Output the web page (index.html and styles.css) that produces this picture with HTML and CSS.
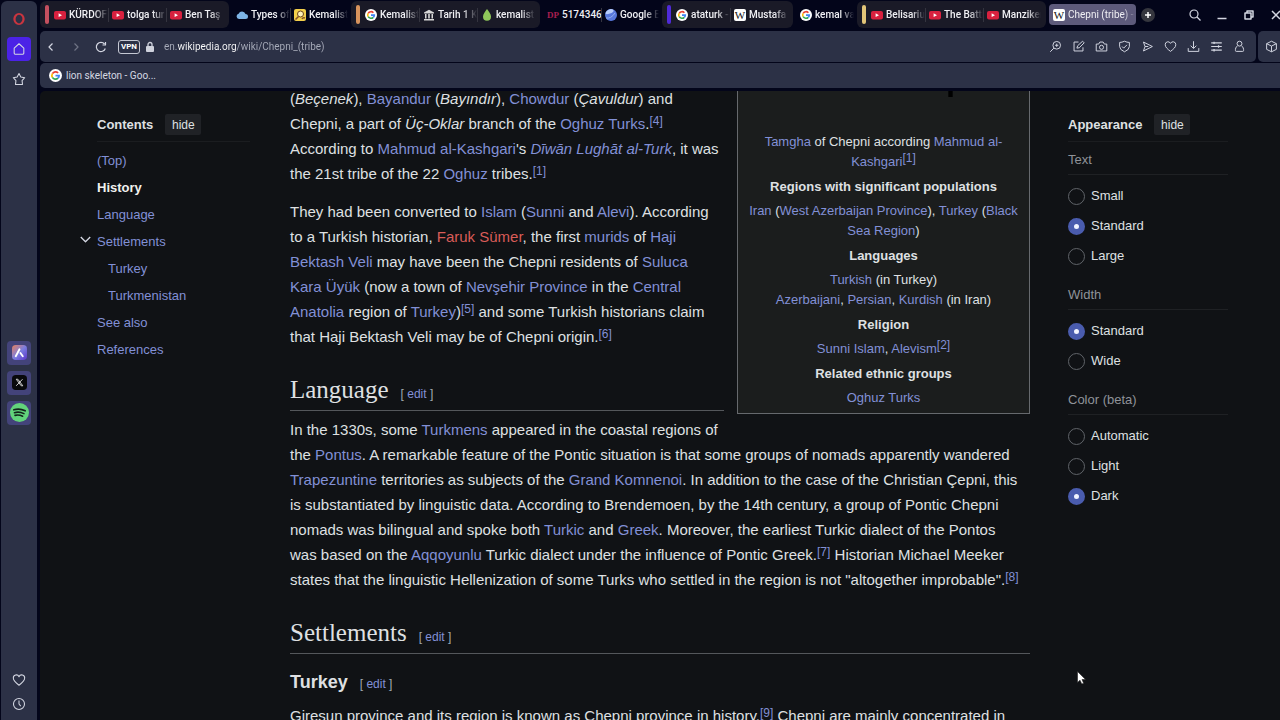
FILE: index.html
```html
<!DOCTYPE html>
<html lang="en">
<head>
    <meta charset="UTF-8">
    <meta name="viewport" content="width=device-width, initial-scale=1.0">
    <title>Chepni (tribe) - Wikipedia</title>
    <link rel="stylesheet" href="styles.css">
</head>
<body>
    <!-- Shared icons -->
    <svg class="sprite" aria-hidden="true">
        <symbol id="youtube" viewBox="0 0 12 12">
            <rect x="0" y="2" width="12" height="8.5" rx="2" fill="#d8213f"/>
            <path d="M4.6 4.3v3.8l3.4-1.9z" fill="#fff"/>
        </symbol>
        <symbol id="google" viewBox="0 0 24 24">
            <circle cx="12" cy="12" r="12" fill="#fff"/>
            <g fill="none" stroke-width="3.2">
                <path d="M6.3 8.6A6.6 6.6 0 0 1 16.8 7.4" stroke="#ea4335"/>
                <path d="M6.3 15.4a6.6 6.6 0 0 1 0-6.8" stroke="#fbbc05"/>
                <path d="M16.6 16.7A6.6 6.6 0 0 1 6.3 15.4" stroke="#34a853"/>
                <path d="M12 12.2h6.6a6.6 6.6 0 0 1-2 4.5" stroke="#4285f4"/>
            </g>
        </symbol>
        <symbol id="heart" viewBox="0 0 16 16">
            <path d="M8 14C4 11 1.5 8.700 1.500 5.800A3.400 3.400 0 0 1 8 4.200a3.400 3.400 0 0 1 6.500 1.600C14.500 8.700 12 11 8 14z"/>
        </symbol>
    </svg>

    <nav class="sidebar">
        <div class="sidebar-top">
            <button class="side-button" aria-label="Menu">
                <svg viewBox="0 0 16 16"><ellipse cx="8" cy="8" rx="5.200" ry="5.600" fill="none" stroke="#c9353f" stroke-width="2.600"/><ellipse cx="8" cy="8" rx="2.800" ry="5" fill="#2c3146"/></svg>
            </button>
            <button class="side-button home" aria-label="Home">
                <svg class="line" viewBox="0 0 16 16"><path d="M2.500 7L8 2l5.500 5v5.500a1.500 1.500 0 0 1-1.500 1.500H4a1.500 1.500 0 0 1-1.500-1.500z"/></svg>
            </button>
            <button class="side-button" aria-label="Bookmarks">
                <svg class="line" viewBox="0 0 16 16"><path d="M8 1.800l2.100 3.900 4.400.8-3 3.300.5 4.400H4l.5-4.400-3-3.300 4.400-.8z"/></svg>
            </button>
        </div>
        <div class="sidebar-apps">
            <button class="app-button" aria-label="Aria">
                <svg viewBox="0 0 16 16">
                    <defs><linearGradient id="aria" x1="0" y1="0" x2="1" y2="1"><stop offset="0" stop-color="#e8825c"/><stop offset=".5" stop-color="#7c7ee0"/><stop offset="1" stop-color="#5a35c8"/></linearGradient></defs>
                    <rect width="16" height="16" rx="4" fill="url(#aria)"/>
                    <path d="M4 12l4-7.500M9 8.500l2.500 3.500" stroke="#fff" stroke-width="2" stroke-linecap="round"/>
                </svg>
            </button>
            <button class="app-button" aria-label="X">
                <svg viewBox="0 0 16 16">
                    <rect width="16" height="16" rx="4" fill="#08090c"/>
                    <path d="M4.500 4.500h1.700l5.300 7H9.800zM11.200 4.500l-6.700 7" fill="none" stroke="#ddd"/>
                </svg>
            </button>
            <button class="app-button" aria-label="Spotify">
                <svg class="spotify" viewBox="0 0 20 20">
                    <circle cx="10" cy="10" r="10" fill="#62d47b"/>
                    <path d="M4 7.200q6-2 12 1M4.700 10.200q5-1.500 10 1M5.300 13q4-1 8 .9" fill="none" stroke="#12251b" stroke-width="1.700" stroke-linecap="round"/>
                </svg>
            </button>
        </div>
        <div class="sidebar-bottom">
            <button class="side-button" aria-label="Favourites"><svg class="line" viewBox="0 0 16 16"><use href="#heart"/></svg></button>
            <button class="side-button" aria-label="History">
                <svg class="line" viewBox="0 0 16 16"><circle cx="8" cy="8" r="6.300"/><path d="M8 4v4l2 2.500"/></svg>
            </button>
        </div>
    </nav>

    <div class="browser">
        <header class="tab-strip">
            <div class="tab-group">
                <span class="group-mark red"></span>
                <button class="tab"><svg><use href="#youtube"/></svg><span>KÜRDOF</span></button>
                <button class="tab"><svg><use href="#youtube"/></svg><span>tolga tur</span></button>
                <button class="tab"><svg><use href="#youtube"/></svg><span>Ben Taş</span></button>
            </div>
            <div class="tab-set">
                <button class="tab">
                    <svg viewBox="0 0 12 12"><path d="M3 10a2.700 2.700 0 0 1-.4-5.300A3.700 3.700 0 0 1 9.500 5 2.500 2.500 0 0 1 9.500 10z" fill="#7db4e6"/></svg>
                    <span>Types of</span>
                </button>
                <button class="tab">
                    <svg viewBox="0 0 12 12"><rect width="12" height="12" rx="2" fill="#f3cf4a"/><circle cx="6.500" cy="5" r="3" fill="#fff2ba" stroke="#6b431d"/><path d="M1.500 10.500l3-3M8 10q1-2 3-1" stroke="#81502a" stroke-width="1.500" fill="none"/></svg>
                    <span>Kemalist</span>
                </button>
            </div>
            <div class="tab-group">
                <span class="group-mark orange"></span>
                <button class="tab"><svg><use href="#google"/></svg><span>Kemalist</span></button>
                <button class="tab">
                    <svg viewBox="0 0 12 12"><path d="M1 3.500L6 .8l5 2.700v1H1zM2 5h1.500v4.500H2zM5.200 5h1.600v4.500H5.200zM8.500 5H10v4.500H8.500zM1 10h10v1.500H1z" fill="#d8d8d8"/></svg>
                    <span>Tarih 1 K</span>
                </button>
                <button class="tab">
                    <svg viewBox="0 0 12 12"><path d="M6 0c2 3 4 5 4 7.700a4 4 0 0 1-8 0C2 5 4 3 6 0z" fill="#8fc75a"/></svg>
                    <span>kemalist</span>
                </button>
            </div>
            <div class="tab-set">
                <button class="tab"><i class="dp-icon">DP</i><span class="whole">5174346</span></button>
                <button class="tab">
                    <svg viewBox="0 0 12 12"><circle cx="6" cy="6" r="6" fill="#5878dc"/><path d="M.5 4A6 6 0 0 1 8 .4Q10 3 5 4.500T.5 4z" fill="#b8ccfa"/><path d="M1 9q5 1 9-5" stroke="#93aff1" fill="none"/></svg>
                    <span>Google E</span>
                </button>
            </div>
            <div class="tab-group">
                <span class="group-mark violet"></span>
                <button class="tab"><svg><use href="#google"/></svg><span>ataturk -</span></button>
                <button class="tab"><i class="wiki-icon">W</i><span>Mustafa</span></button>
            </div>
            <div class="tab-set">
                <button class="tab"><svg><use href="#google"/></svg><span>kemal va</span></button>
            </div>
            <div class="tab-group">
                <span class="group-mark yellow"></span>
                <button class="tab"><svg><use href="#youtube"/></svg><span>Belisarius</span></button>
                <button class="tab"><svg><use href="#youtube"/></svg><span>The Battl</span></button>
                <button class="tab"><svg><use href="#youtube"/></svg><span>Manziker</span></button>
            </div>
            <button class="tab active"><i class="wiki-icon">W</i><span>Chepni (tribe) -</span></button>
            <button class="new-tab" aria-label="New tab"><svg viewBox="0 0 8 8"><path d="M4 1v6M1 4h6" stroke="#fff" stroke-width="1.500"/></svg></button>
            <div class="window-controls">
                <button aria-label="Search tabs"><svg viewBox="0 0 12 12"><circle cx="5" cy="5" r="4"/><path d="M8 8l3.500 3.500"/></svg></button>
                <button aria-label="Minimize"><svg viewBox="0 0 12 12"><path d="M1.500 9.500h9" stroke-width="1.500"/></svg></button>
                <button aria-label="Restore"><svg viewBox="0 0 12 12"><path d="M2 4h6v6H2zM4 4V2h6v6H8" stroke-width="1.500"/></svg></button>
                <button aria-label="Close"><svg viewBox="0 0 12 12"><path d="M2 2l8 8M10 2l-8 8" stroke-width="1.500"/></svg></button>
            </div>
        </header>

        <div class="toolbar-row">
            <div class="toolbar">
                <div class="nav-buttons">
                    <button aria-label="Back"><svg viewBox="0 0 14 14"><path d="M8.500 3.500L5 7l3.500 3.500"/></svg></button>
                    <button aria-label="Forward" disabled><svg viewBox="0 0 14 14"><path d="M5.500 3.500L9 7l-3.500 3.500"/></svg></button>
                    <button aria-label="Reload"><svg viewBox="0 0 14 14"><path d="M11.300 8.500A4.600 4.600 0 1 1 10.500 4M11.500 2v3H8.500"/></svg></button>
                </div>
                <button class="vpn">VPN</button>
                <svg class="lock" viewBox="0 0 8 12"><rect y="5" width="8" height="6" rx="1" fill="#cfd2dc"/><path d="M2 5V3.500a2 2 0 0 1 4 0V5" fill="none" stroke="#cfd2dc" stroke-width="1.300"/></svg>
                <input class="address" type="text" aria-label="Address" value="en.wikipedia.org/wiki/Chepni_(tribe)">
                <div class="tool-buttons">
                    <button aria-label="Zoom"><svg viewBox="0 0 16 16"><circle cx="9.500" cy="6.500" r="4.700"/><path d="M6 10l-4.500 4.500M7.500 6.500h4M9.500 4.500v4"/></svg></button>
                    <button aria-label="Edit"><svg viewBox="0 0 16 16"><path d="M8 2.500H2.500v11h11V9M6 10l1-3 6-5.500 2 2L9 9.500z"/></svg></button>
                    <button aria-label="Snapshot"><svg viewBox="0 0 16 16"><path d="M1.500 5h3L6 2.500h4L11.500 5h3v8.500h-13z"/><circle cx="8" cy="9" r="2.500"/></svg></button>
                    <button aria-label="Protection"><svg viewBox="0 0 16 16"><path d="M8 1.500q3 1.500 6 1.500v5q0 4-6 6.500Q2 12 2 8V3q3 0 6-1.500zM5 8l2 2 4-4"/></svg></button>
                    <button aria-label="Send"><svg viewBox="0 0 16 16"><path d="M3 2.500L14 8 3 13.500 5 8zM5 8h4"/></svg></button>
                    <button aria-label="Add to favourites"><svg viewBox="0 0 16 16"><use href="#heart"/></svg></button>
                    <button aria-label="Downloads"><svg viewBox="0 0 16 16"><path d="M8 1.500V10M4.500 7L8 10.500 11.500 7M1.500 10v4h13v-4"/></svg></button>
                    <button aria-label="Easy setup"><svg viewBox="0 0 16 16"><path d="M1.500 3.500h13M1.500 8h13M1.500 12.500h13M5 2v3M10.500 6.500v3M5 11v3" stroke-width="1.500"/></svg></button>
                    <button aria-label="Profile"><svg viewBox="0 0 16 16"><circle cx="8" cy="4.500" r="3"/><path d="M5.500 7.500q-2.500 1-2.500 4v1.500q0 1 1 1h8q1 0 1-1v-1.500q0-3-2.500-4"/></svg></button>
                </div>
            </div>
            <div class="toolbar extensions">
                <button aria-label="Extensions"><svg viewBox="0 0 16 16"><path d="M8 1.500l6 3v7l-6 3-6-3v-7zM2 4.500l6 3 6-3M8 7.500v7"/></svg></button>
            </div>
        </div>

        <div class="bookmarks">
            <a href="#"><svg><use href="#google"/></svg>lion skeleton - Goo...</a>
        </div>

        <main class="page">
            <nav class="contents">
                <div class="panel-head"><h2>Contents</h2><button class="hide-button">hide</button></div>
                <ul>
                    <li><a href="#">(Top)</a></li>
                    <li><a class="current" href="#">History</a></li>
                    <li><a href="#language">Language</a></li>
                    <li>
                        <button class="toggle" aria-label="Toggle Settlements subsection"><svg viewBox="0 0 10 6"><path d="M.7.7L5 5 9.300.7"/></svg></button>
                        <a href="#settlements">Settlements</a>
                        <ul>
                            <li><a href="#turkey">Turkey</a></li>
                            <li><a href="#">Turkmenistan</a></li>
                        </ul>
                    </li>
                    <li><a href="#">See also</a></li>
                    <li><a href="#">References</a></li>
                </ul>
            </nav>

            <article class="article">
                <table class="infobox">
                    <tr><td class="tamgha"><svg viewBox="0 0 60 60"><path d="M30 0v60" stroke="#000" stroke-width="9"/></svg></td></tr>
                    <tr><td><a href="#">Tamgha</a> of Chepni according <a href="#">Mahmud al-<br>Kashgari</a><sup><a href="#">[1]</a></sup></td></tr>
                    <tr><th>Regions with significant populations</th></tr>
                    <tr><td><a href="#">Iran</a> (<a href="#">West Azerbaijan Province</a>), <a href="#">Turkey</a> (<a href="#">Black<br>Sea Region</a>)</td></tr>
                    <tr><th>Languages</th></tr>
                    <tr><td><a href="#">Turkish</a> (in Turkey)<br><a href="#">Azerbaijani</a>, <a href="#">Persian</a>, <a href="#">Kurdish</a> (in Iran)</td></tr>
                    <tr><th>Religion</th></tr>
                    <tr><td><a href="#">Sunni Islam</a>, <a href="#">Alevism</a><sup><a href="#">[2]</a></sup></td></tr>
                    <tr><th>Related ethnic groups</th></tr>
                    <tr><td><a href="#">Oghuz Turks</a></td></tr>
                </table>

                <p>(<i>Beçenek</i>), <a href="#">Bayandur</a> (<i>Bayındır</i>), <a href="#">Chowdur</a> (<i>Çavuldur</i>) and<br>
                Chepni, a part of <i>Üç-Oklar</i> branch of the <a href="#">Oghuz Turks</a>.<sup><a href="#">[4]</a></sup><br>
                According to <a href="#">Mahmud al-Kashgari</a>'s <a href="#"><i>Dīwān Lughāt al-Turk</i></a>, it was<br>
                the 21st tribe of the 22 <a href="#">Oghuz</a> tribes.<sup><a href="#">[1]</a></sup></p>

                <p>They had been converted to <a href="#">Islam</a> (<a href="#">Sunni</a> and <a href="#">Alevi</a>). According<br>
                to a Turkish historian, <a class="new" href="#">Faruk Sümer</a>, the first <a href="#">murids</a> of <a href="#">Haji<br>
                Bektash Veli</a> may have been the Chepni residents of <a href="#">Suluca<br>
                Kara Üyük</a> (now a town of <a href="#">Nevşehir Province</a> in the <a href="#">Central<br>
                Anatolia</a> region of <a href="#">Turkey</a>)<sup><a href="#">[5]</a></sup> and some Turkish historians claim<br>
                that Haji Bektash Veli may be of Chepni origin.<sup><a href="#">[6]</a></sup></p>

                <div class="heading" id="language"><h2>Language</h2><span class="edit">[ <a href="#">edit</a> ]</span></div>

                <p>In the 1330s, some <a href="#">Turkmens</a> appeared in the coastal regions of<br>
                the <a href="#">Pontus</a>. A remarkable feature of the Pontic situation is that some groups of nomads apparently wandered<br>
                <a href="#">Trapezuntine</a> territories as subjects of the <a href="#">Grand Komnenoi</a>. In addition to the case of the Christian Çepni, this<br>
                is substantiated by linguistic data. According to Brendemoen, by the 14th century, a group of Pontic Chepni<br>
                nomads was bilingual and spoke both <a href="#">Turkic</a> and <a href="#">Greek</a>. Moreover, the earliest Turkic dialect of the Pontos<br>
                was based on the <a href="#">Aqqoyunlu</a> Turkic dialect under the influence of Pontic Greek.<sup><a href="#">[7]</a></sup> Historian Michael Meeker<br>
                states that the linguistic Hellenization of some Turks who settled in the region is not "altogether improbable".<sup><a href="#">[8]</a></sup></p>

                <div class="heading" id="settlements"><h2>Settlements</h2><span class="edit">[ <a href="#">edit</a> ]</span></div>
                <div class="subheading" id="turkey"><h3>Turkey</h3><span class="edit">[ <a href="#">edit</a> ]</span></div>

                <p>Giresun province and its region is known as Chepni province in history.<sup><a href="#">[9]</a></sup> Chepni are mainly concentrated in</p>
            </article>

            <aside class="appearance">
                <div class="panel-head"><h2>Appearance</h2><button class="hide-button">hide</button></div>
                <fieldset>
                    <legend>Text</legend>
                    <label><input type="radio" name="text">Small</label>
                    <label><input type="radio" name="text" checked>Standard</label>
                    <label><input type="radio" name="text">Large</label>
                </fieldset>
                <fieldset>
                    <legend>Width</legend>
                    <label><input type="radio" name="width" checked>Standard</label>
                    <label><input type="radio" name="width">Wide</label>
                </fieldset>
                <fieldset>
                    <legend>Color (beta)</legend>
                    <label><input type="radio" name="color">Automatic</label>
                    <label><input type="radio" name="color">Light</label>
                    <label><input type="radio" name="color" checked>Dark</label>
                </fieldset>
            </aside>
        </main>
    </div>

    <svg class="cursor" viewBox="0 0 9 14"><path d="M.5.5v11l2.500-2.300L4.800 13l1.800-.8L5 8.500h3.500z" fill="#fff" stroke="#222" stroke-width=".6"/></svg>
</body>
</html>
```

FILE: styles.css
```css
* {
    margin: 0;
    padding: 0;
    box-sizing: border-box;
}

body {
    display: flex;
    gap: 3px;
    height: 100vh;
    padding-left: 1px;
    overflow: hidden;
    background: #03051a;
    color: #dfe0e2;
    font-family: "Liberation Sans", Arial, sans-serif;
}

a {
    color: #8290d6;
    text-decoration: none;
}

button {
    border: none;
    background: none;
    color: inherit;
    font: inherit;
    cursor: pointer;
}

svg {
    display: block;
    flex: none;
}

.sprite {
    position: absolute;
    width: 0;
    height: 0;
}

/* Sidebar */

.sidebar {
    flex: none;
    display: flex;
    flex-direction: column;
    justify-content: space-between;
    width: 36px;
    padding: 6px 6px 4px;
    margin-top: 1px;
    border-radius: 6px 6px 0 0;
    background: #2c3146;
}

.sidebar-top,
.sidebar-apps,
.sidebar-bottom {
    display: flex;
    flex-direction: column;
    gap: 6px;
}

.sidebar-apps {
    margin-top: 6px;
}

.sidebar-bottom {
    gap: 0;
}

.side-button,
.app-button {
    display: flex;
    align-items: center;
    justify-content: center;
    width: 24px;
    height: 24px;
    border-radius: 4px;
}

.side-button svg {
    width: 14px;
    height: 14px;
}

.home {
    background: #4b22e6;
}

.app-button {
    background: #43437a;
}

.app-button svg {
    width: 15px;
    height: 15px;
}

.app-button .spotify {
    width: 19px;
    height: 19px;
}

.line,
.window-controls svg,
.toolbar button svg,
.toggle svg {
    fill: none;
    stroke: #d4d7e2;
    stroke-width: 1.2;
    stroke-linejoin: round;
}

/* Tabs */

.browser {
    flex: 1;
    min-width: 0;
    display: flex;
    flex-direction: column;
    font-family: Roboto, "Noto Sans", sans-serif;
}

.tab-strip {
    display: flex;
    align-items: center;
    gap: 3px;
    height: 31px;
    padding: 1px 0 3px;
    overflow: hidden;
}

.tab-group,
.tab-set {
    flex: none;
    display: flex;
    align-items: center;
    height: 27px;
}

.tab-group {
    padding: 0 5px;
    border-radius: 6px;
    background: #1a1a27;
}

.group-mark {
    width: 4px;
    height: 19px;
    margin-right: 1px;
    border-radius: 2px;
}

.red { background: #c4505f; }
.orange { background: #d8935c; }
.violet { background: #4f2ad8; }
.yellow { background: #e2c578; }

.tab {
    flex: none;
    display: flex;
    align-items: center;
    gap: 3px;
    width: 58px;
    height: 21px;
    padding-left: 4px;
    color: #f0f0f4;
    font-size: 10px;
    font-weight: 500;
    line-height: 14px;
}

.tab svg {
    width: 12px;
    height: 12px;
}

.tab span {
    flex: 1;
    overflow: hidden;
    text-align: left;
    white-space: nowrap;
    -webkit-mask-image: linear-gradient(90deg, #000 65%, transparent);
    mask-image: linear-gradient(90deg, #000 65%, transparent);
}

.tab .whole {
    -webkit-mask-image: none;
    mask-image: none;
}

.tab + .tab {
    background: linear-gradient(#34343f, #34343f) 0 50% / 1px 14px no-repeat;
}

.tab.active {
    width: 87px;
    border-radius: 4px;
    background: #5d5a7b;
    font-weight: 400;
}

.tab.active span {
    -webkit-mask-image: linear-gradient(90deg, #000 80%, transparent);
    mask-image: linear-gradient(90deg, #000 80%, transparent);
}

.wiki-icon,
.dp-icon {
    flex: none;
    width: 12px;
    height: 12px;
    font: 11px/12px "Liberation Serif", serif;
    text-align: center;
}

.wiki-icon {
    border-radius: 2px;
    background: #fff;
    color: #111;
}

.dp-icon {
    color: #a81f50;
    font-size: 9px;
    font-weight: bold;
}

.new-tab {
    flex: none;
    display: grid;
    place-items: center;
    width: 14px;
    height: 14px;
    margin-left: 2px;
    border-radius: 50%;
    background: #35363e;
}

.new-tab svg {
    width: 8px;
    height: 8px;
}

.window-controls {
    flex: none;
    display: flex;
    gap: 15px;
    margin-left: auto;
    margin-right: -2px;
}

.window-controls svg {
    width: 12px;
    height: 12px;
}

/* Toolbar */

.toolbar-row {
    flex: none;
    display: flex;
    gap: 2px;
}

.toolbar {
    flex: 1;
    display: flex;
    align-items: center;
    height: 31px;
    padding: 0 10px 0 4px;
    border-radius: 5px;
    background: #2c3146;
}

.nav-buttons {
    display: flex;
    gap: 11px;
}

.toolbar button svg {
    width: 13px;
    height: 13px;
}

.nav-buttons button svg {
    width: 14px;
    height: 14px;
}

.nav-buttons button:disabled {
    opacity: 0.4;
}

.vpn {
    width: 22px;
    height: 14px;
    margin: 0 6px 0 10px;
    border: 1px solid #c5c8d3;
    border-radius: 3px;
    color: #fff;
    font-size: 8px;
    font-weight: 700;
    line-height: 12px;
}

.lock {
    width: 8px;
    height: 12px;
}

/* the host name is brighter than the rest of the address */
.address {
    flex: 1;
    min-width: 0;
    margin-left: 10px;
    border: none;
    outline: none;
    background: linear-gradient(90deg, #a9adbb 13px, #fff 13px, #fff 72px, #a9adbb 72px);
    -webkit-background-clip: text;
    background-clip: text;
    color: transparent;
    font: 10px/16px Roboto, "Noto Sans", sans-serif;
}

.tool-buttons {
    display: flex;
    gap: 10px;
}

.toolbar.extensions {
    flex: none;
    width: 22px;
    padding: 0 0 0 7px;
    border-radius: 5px 0 0 5px;
}

.bookmarks {
    flex: none;
    display: flex;
    align-items: center;
    height: 25px;
    margin: 1px 0 3px;
    padding-left: 9px;
    border-radius: 5px 0 0 5px;
    background: #2c3146;
}

.bookmarks a {
    display: flex;
    align-items: center;
    gap: 4px;
    color: #d5d8e2;
    font-size: 10px;
    line-height: 14px;
}

.bookmarks svg {
    width: 13px;
    height: 13px;
}

/* Page */

.page {
    flex: 1;
    min-height: 0;
    display: grid;
    grid-template-columns: 153px minmax(0, 1fr) 160px;
    align-items: start;
    padding: 0 52px 0 57px;
    overflow: hidden;
    border-radius: 5px 0 0 0;
    background: #101215;
    font: 13px/18px "Liberation Sans", Arial, sans-serif;
}

.panel-head {
    display: flex;
    align-items: center;
    gap: 12px;
    padding-bottom: 6px;
    border-bottom: 1px solid #1b1d20;
}

.panel-head h2 {
    font-size: 13px;
    line-height: 20px;
}

.hide-button {
    width: 36px;
    height: 21px;
    border-radius: 2px;
    background: #202226;
    font-size: 12px;
    line-height: 16px;
}

.contents,
.appearance {
    padding-top: 23px;
}

.contents > ul {
    margin-top: 5px;
}

.contents ul {
    list-style: none;
}

.contents li {
    position: relative;
    line-height: 27px;
}

.contents li li {
    padding-left: 11px;
}

.contents .current {
    color: #f1f1ee;
    font-weight: bold;
}

.toggle {
    position: absolute;
    left: -17px;
    top: 8px;
}

.toggle svg {
    width: 11px;
    height: 7px;
}

/* Article */

.article {
    margin: -5px 38px 0 40px;
    font-size: 15px;
    line-height: 25px;
}

.article p {
    margin-bottom: 13px;
    white-space: nowrap;
}

.article .new {
    color: #d95c58;
}

.article sup {
    font-size: 12px;
    line-height: 1px;
    vertical-align: 4px;
}

.infobox {
    float: right;
    width: 293px;
    margin: -22px 0 8px 13px;
    padding: 3px;
    border: 1px solid #66696d;
    border-spacing: 0;
    background: #1b1d1d;
    font-size: 13px;
    line-height: 20px;
    text-align: center;
    white-space: nowrap;
}

.infobox td {
    padding: 2px 0;
}

.infobox th {
    padding: 3px 0 2px;
}

.infobox .tamgha {
    height: 62px;
    padding: 0 0 0 134px;
    vertical-align: top;
}

.tamgha svg {
    width: 29px;
    height: 29px;
    margin: 0 auto;
}

.heading,
.subheading {
    display: flex;
    align-items: baseline;
    gap: 12px;
}

.heading {
    margin: 25px 0 6px;
    padding-bottom: 3px;
    border-bottom: 1px solid #54575b;
}

.heading h2 {
    font: 25px/32px "Liberation Serif", Georgia, serif;
}

.subheading {
    margin-bottom: 6px;
    padding-top: 8px;
}

.subheading h3 {
    font-size: 18px;
    line-height: 28px;
}

.edit {
    color: #a2a9b1;
    font-size: 12px;
}

/* Appearance */

.appearance fieldset {
    margin-bottom: 15px;
    border: none;
}

.appearance .panel-head {
    margin-bottom: 9px;
}

.appearance legend {
    width: 100%;
    margin-bottom: 6px;
    padding-bottom: 5px;
    border-bottom: 1px solid #1f2124;
    color: #8f9399;
}

.appearance label {
    display: flex;
    align-items: center;
    gap: 6px;
    height: 30px;
}

.appearance input {
    appearance: none;
    width: 17px;
    height: 17px;
    border: 1px solid #606469;
    border-radius: 50%;
}

.appearance input:checked {
    border: 6px solid #4a5cae;
    background: #f2f4ff;
}

.cursor {
    position: fixed;
    left: 1077px;
    top: 671px;
    width: 9px;
    height: 14px;
}
```
